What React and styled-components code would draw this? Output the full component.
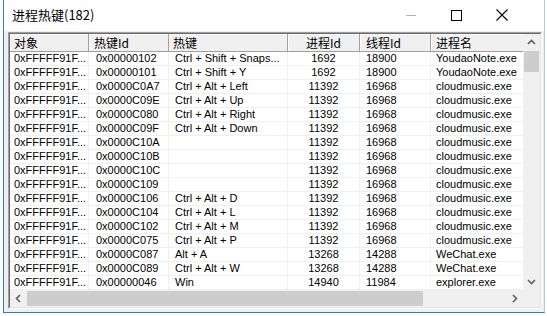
import React from "react"
import styled, { createGlobalStyle } from "styled-components"

const GlobalStyle = createGlobalStyle`
  html, body {
    margin: 0;
    padding: 0;
    background: #fff;
    overflow: hidden;
  }
`

const Desk = styled.div`
  width: 547px;
  height: 316px;
  padding-left: 3px;
  box-sizing: border-box;
  background: #fff;
  overflow: hidden;
`

const Window = styled.div`
  width: 542px;
  height: 313px;
  box-sizing: border-box;
  border-left: 1px solid #2b7bd0;
  border-right: 1px solid #b9c9dc;
  border-bottom: 1px solid #2b7bd0;
  display: flex;
  flex-direction: column;
`

const TitleBar = styled.div`
  height: 31px;
  flex: none;
  display: flex;
  align-items: center;
  padding: 0 20px 0 8px;
  background: #fff;
`

const Title = styled.div`
  flex: 1;
  font-family: "Noto Sans CJK SC", "Liberation Sans", sans-serif;
  font-size: 13px;
  color: #000;
  margin-top: -2px;
`

const CapButton = styled.div`
  width: 45px;
  height: 31px;
  display: flex;
  align-items: center;
  justify-content: center;
  margin-top: ${({ $lift }) => $lift || 0}px;
`

const Client = styled.div`
  flex: 1;
  background: #f0f0f0;
  padding: 1px 2px 3px 4px;
  display: flex;
`

const ListOuter = styled.div`
  flex: 1;
  border: 1px solid;
  border-color: #a0a0a0 #fff #fff #a0a0a0;
  display: flex;
`

const ListInner = styled.div`
  flex: 1;
  border: 1px solid;
  border-color: #696969 #e3e3e3 #e3e3e3 #696969;
  display: grid;
  grid-template-columns: 1fr 17px;
  grid-template-rows: 1fr 17px;
  background: #fff;
  min-width: 0;
`

const Viewport = styled.div`
  overflow: hidden;
  min-width: 0;
`

const Row = styled.div`
  display: grid;
  grid-template-columns: 79px 80px 119px 72px 71px 110px;
  height: ${({ $head }) => ($head ? 18 : 14)}px;
  box-sizing: border-box;
  border-bottom: 1px solid ${({ $head }) => ($head ? "#a0a0a0" : "#f0f0f0")};
  background: ${({ $head }) => ($head ? "#f0f0f0" : "#fff")};
`

const HeadCell = styled.div`
  font-family: "Noto Sans CJK SC", "Liberation Sans", sans-serif;
  font-size: 12px;
  line-height: 17px;
  color: #000;
  padding-left: ${({ $pad }) => $pad}px;
  text-align: ${({ $center }) => ($center ? "center" : "left")};
  border-right: 1px solid #a0a0a0;
  box-shadow: inset 1px 1px 0 #fff;
  white-space: nowrap;
  overflow: hidden;
`

const Cell = styled.div`
  font-family: "Liberation Sans", Arial, sans-serif;
  font-size: 11px;
  line-height: 13px;
  color: #000;
  padding-left: ${({ $pad }) => $pad}px;
  text-align: ${({ $center }) => ($center ? "center" : "left")};
  border-right: 1px solid #f0f0f0;
  white-space: nowrap;
  overflow: hidden;
`

const VScroll = styled.div`
  background: #f0f0f0;
  display: flex;
  flex-direction: column;
`

const HScroll = styled.div`
  background: #f0f0f0;
  display: flex;
`

const ArrowBtn = styled.div`
  width: 17px;
  height: 17px;
  flex: none;
  display: flex;
  align-items: center;
  justify-content: center;
`

const VThumb = styled.div`
  height: 21px;
  margin: 0 1px;
  background: #cdcdcd;
`

const HThumb = styled.div`
  width: 396px;
  margin: 1px 0;
  background: #cdcdcd;
`

const Spacer = styled.div`
  flex: 1;
`

const Corner = styled.div`
  background: #f0f0f0;
`

const Chevron = ({ dir }) => {
  const rot = { up: 0, down: 180, left: -90, right: 90 }[dir]
  return (
    <svg width="9" height="9" viewBox="0 0 9 9" style={{ transform: `rotate(${rot}deg)` }}>
      <path d="M1 6 L4.5 2.5 L8 6" fill="none" stroke="#606060" strokeWidth="1.6" />
    </svg>
  )
}

const columns = [
  { name: "对象", pad: 4 },
  { name: "热键Id", pad: 5 },
  { name: "热键", pad: 4 },
  { name: "进程Id", center: true },
  { name: "线程Id", pad: 6 },
  { name: "进程名", pad: 5 },
]
const cellPads = [4, 7, 6, 0, 6, 5]

const obj = "0xFFFFF91F..."
const rows = [
  [obj, "0x00000102", "Ctrl + Shift + Snaps...", "1692", "18900", "YoudaoNote.exe"],
  [obj, "0x00000101", "Ctrl + Shift + Y", "1692", "18900", "YoudaoNote.exe"],
  [obj, "0x0000C0A7", "Ctrl + Alt + Left", "11392", "16968", "cloudmusic.exe"],
  [obj, "0x0000C09E", "Ctrl + Alt + Up", "11392", "16968", "cloudmusic.exe"],
  [obj, "0x0000C080", "Ctrl + Alt + Right", "11392", "16968", "cloudmusic.exe"],
  [obj, "0x0000C09F", "Ctrl + Alt + Down", "11392", "16968", "cloudmusic.exe"],
  [obj, "0x0000C10A", "", "11392", "16968", "cloudmusic.exe"],
  [obj, "0x0000C10B", "", "11392", "16968", "cloudmusic.exe"],
  [obj, "0x0000C10C", "", "11392", "16968", "cloudmusic.exe"],
  [obj, "0x0000C109", "", "11392", "16968", "cloudmusic.exe"],
  [obj, "0x0000C106", "Ctrl + Alt + D", "11392", "16968", "cloudmusic.exe"],
  [obj, "0x0000C104", "Ctrl + Alt + L", "11392", "16968", "cloudmusic.exe"],
  [obj, "0x0000C102", "Ctrl + Alt + M", "11392", "16968", "cloudmusic.exe"],
  [obj, "0x0000C075", "Ctrl + Alt + P", "11392", "16968", "cloudmusic.exe"],
  [obj, "0x0000C087", "Alt + A", "13268", "14288", "WeChat.exe"],
  [obj, "0x0000C089", "Ctrl + Alt + W", "13268", "14288", "WeChat.exe"],
  [obj, "0x00000046", "Win", "14940", "11984", "explorer.exe"],
]

export default function App() {
  return (
    <Desk>
      <GlobalStyle />
      <Window>
        <TitleBar>
          <Title>进程热键(182)</Title>
          <CapButton>
            <svg width="11" height="11" viewBox="0 0 11 11">
              <path d="M0 5.5 H10" stroke="#b4b4b4" strokeWidth="1" />
            </svg>
          </CapButton>
          <CapButton $lift={-1}>
            <svg width="11" height="11" viewBox="0 0 11 11">
              <rect x="0.5" y="0.5" width="10" height="10" fill="none" stroke="#000" strokeWidth="1" />
            </svg>
          </CapButton>
          <CapButton $lift={-1}>
            <svg width="12" height="12" viewBox="0 0 12 12">
              <path d="M0.5 0.5 L11.5 11.5 M11.5 0.5 L0.5 11.5" stroke="#000" strokeWidth="1.1" />
            </svg>
          </CapButton>
        </TitleBar>
        <Client>
          <ListOuter>
            <ListInner>
              <Viewport>
                <Row $head>
                  {columns.map((c) => (
                    <HeadCell key={c.name} $pad={c.pad || 0} $center={c.center}>
                      {c.name}
                    </HeadCell>
                  ))}
                </Row>
                {rows.map((r) => (
                  <Row key={r[1]}>
                    {r.map((v, i) => (
                      <Cell key={i} $pad={cellPads[i]} $center={i === 3}>
                        {v}
                      </Cell>
                    ))}
                  </Row>
                ))}
              </Viewport>
              <VScroll>
                <ArrowBtn>
                  <Chevron dir="up" />
                </ArrowBtn>
                <VThumb />
                <Spacer />
                <ArrowBtn>
                  <Chevron dir="down" />
                </ArrowBtn>
              </VScroll>
              <HScroll>
                <ArrowBtn>
                  <Chevron dir="left" />
                </ArrowBtn>
                <HThumb />
                <Spacer />
                <ArrowBtn>
                  <Chevron dir="right" />
                </ArrowBtn>
              </HScroll>
              <Corner />
            </ListInner>
          </ListOuter>
        </Client>
      </Window>
    </Desk>
  )
}
